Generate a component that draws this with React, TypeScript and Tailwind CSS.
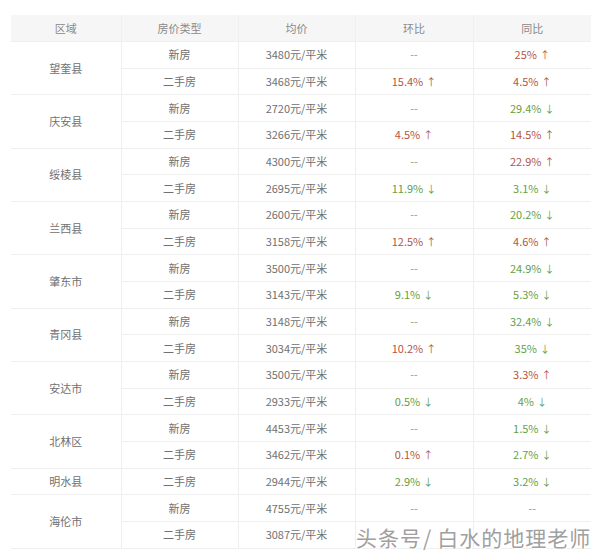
import React from 'react';

type Row = { type: string; price: string; mom: string; yoy: string };
type Group = { region: string; rows: Row[] };

const DATA: Group[] = [
  { region: '望奎县', rows: [
    { type: '新房', price: '3480元/平米', mom: '--', yoy: '25%↑' },
    { type: '二手房', price: '3468元/平米', mom: '15.4%↑', yoy: '4.5%↑' },
  ] },
  { region: '庆安县', rows: [
    { type: '新房', price: '2720元/平米', mom: '--', yoy: '29.4%↓' },
    { type: '二手房', price: '3266元/平米', mom: '4.5%↑', yoy: '14.5%↑' },
  ] },
  { region: '绥棱县', rows: [
    { type: '新房', price: '4300元/平米', mom: '--', yoy: '22.9%↑' },
    { type: '二手房', price: '2695元/平米', mom: '11.9%↓', yoy: '3.1%↓' },
  ] },
  { region: '兰西县', rows: [
    { type: '新房', price: '2600元/平米', mom: '--', yoy: '20.2%↓' },
    { type: '二手房', price: '3158元/平米', mom: '12.5%↑', yoy: '4.6%↑' },
  ] },
  { region: '肇东市', rows: [
    { type: '新房', price: '3500元/平米', mom: '--', yoy: '24.9%↓' },
    { type: '二手房', price: '3143元/平米', mom: '9.1%↓', yoy: '5.3%↓' },
  ] },
  { region: '青冈县', rows: [
    { type: '新房', price: '3148元/平米', mom: '--', yoy: '32.4%↓' },
    { type: '二手房', price: '3034元/平米', mom: '10.2%↑', yoy: '35%↓' },
  ] },
  { region: '安达市', rows: [
    { type: '新房', price: '3500元/平米', mom: '--', yoy: '3.3%↑' },
    { type: '二手房', price: '2933元/平米', mom: '0.5%↓', yoy: '4%↓' },
  ] },
  { region: '北林区', rows: [
    { type: '新房', price: '4453元/平米', mom: '--', yoy: '1.5%↓' },
    { type: '二手房', price: '3462元/平米', mom: '0.1%↑', yoy: '2.7%↓' },
  ] },
  { region: '明水县', rows: [
    { type: '二手房', price: '2944元/平米', mom: '2.9%↓', yoy: '3.2%↓' },
  ] },
  { region: '海伦市', rows: [
    { type: '新房', price: '4755元/平米', mom: '--', yoy: '--' },
    { type: '二手房', price: '3087元/平米', mom: '', yoy: '' },
  ] },
];

const Change = ({ value }: { value: string }) => {
  if (value.endsWith('↑')) {
    return (
      <span className="text-[#b4553f]">
        {value.slice(0, -1)}<span className="ml-[3px] text-[10px]">↑</span>
      </span>
    );
  }
  if (value.endsWith('↓')) {
    return (
      <span className="text-[#66a045]">
        {value.slice(0, -1)}<span className="ml-[3px] text-[10px]">↓</span>
      </span>
    );
  }
  return <span className="text-[#9a9a9a]">{value}</span>;
};

const cell = 'h-[26.67px] p-0 text-center align-middle border border-[#efefef]';

export default function App() {
  return (
    <div
      className="relative w-[600px] h-[559px] bg-white overflow-hidden pt-[15px] pl-[11px]"
      style={{ fontFamily: '"Noto Sans CJK SC", "Noto Sans", sans-serif' }}
    >
      <table className="w-[580px] border-collapse table-fixed text-[11px] leading-none text-[#707070]">
        <colgroup>
          <col className="w-[110px]" />
          <col className="w-[117px]" />
          <col className="w-[117px]" />
          <col className="w-[118px]" />
          <col className="w-[118px]" />
        </colgroup>
        <thead>
          <tr className="bg-[#f6f6f6] text-[#8a8a8a]">
            <th className={`${cell} font-normal border-t-0 border-l-0`}>区域</th>
            <th className={`${cell} font-normal border-t-0`}>房价类型</th>
            <th className={`${cell} font-normal border-t-0`}>均价</th>
            <th className={`${cell} font-normal border-t-0`}>环比</th>
            <th className={`${cell} font-normal border-t-0 border-r-0`}>同比</th>
          </tr>
        </thead>
        <tbody>
          {DATA.map(group =>
            group.rows.map((row, i) => (
              <tr key={group.region + i}>
                {i === 0 && (
                  <td className={`${cell} border-l-0`} rowSpan={group.rows.length}>
                    {group.region}
                  </td>
                )}
                <td className={cell}>{row.type}</td>
                <td className={cell}>{row.price}</td>
                <td className={cell}><Change value={row.mom} /></td>
                <td className={`${cell} border-r-0`}><Change value={row.yoy} /></td>
              </tr>
            ))
          )}
        </tbody>
      </table>

      {/* watermark */}
      <div
        className="absolute left-[356px] top-[527px] flex items-baseline text-[21px] leading-none text-[#a0a0a0] whitespace-nowrap"
        style={{ textShadow: '1px 1px 0 #fff, -1px -1px 0 #fff' }}
      >
        <span className="tracking-[1px]">头条号</span>
        <span className="ml-[1px] mr-[6px]">/</span>
        <span className="tracking-[1px]">白水的地理老师</span>
      </div>
    </div>
  );
}
